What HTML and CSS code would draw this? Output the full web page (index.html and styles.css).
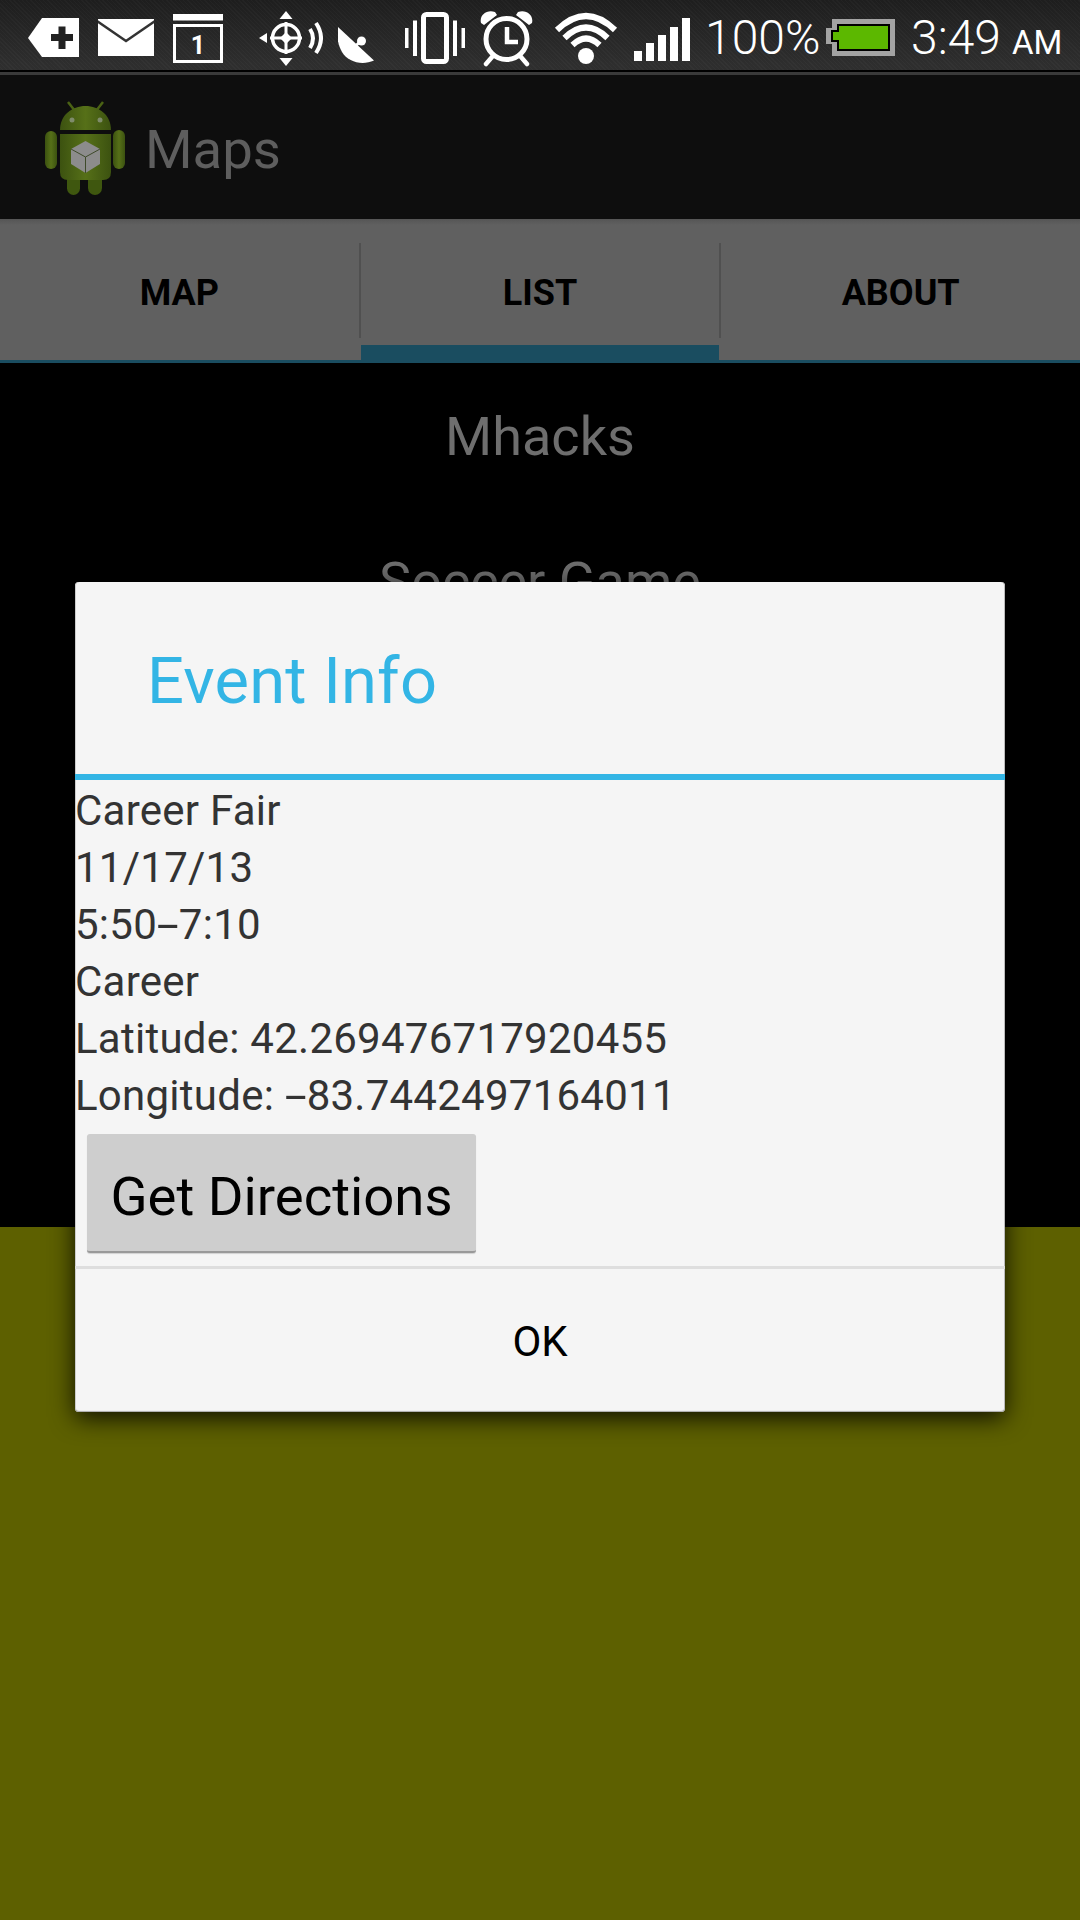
FILE: index.html
```html
<!DOCTYPE html>
<html lang="en">
<head>
<meta charset="utf-8">
<title>Maps</title>
<link rel="stylesheet" href="styles.css">
</head>
<body>
<div class="screen">
  <header class="status">
    <svg class="ic ic-tag" viewBox="28 0 51 72"><path fill="#fff" d="M28 38 42 18H79V57H42Z"/><path fill="#222" d="M58.500 26.500h7v7.500H73v7h-7.500v8h-7v-8H51v-7h7.500Z"/></svg>
    <svg class="ic ic-mail" viewBox="98 0 56 72"><rect x="98" y="19" width="56" height="37" fill="#fff"/><path d="M97 21 126 41 155 21" fill="none" stroke="#333" stroke-width="2.500"/></svg>
    <svg class="ic ic-cal" viewBox="173 0 50 72"><rect x="173" y="14" width="50" height="6.500" fill="#fff"/><rect x="174.500" y="25.500" width="47" height="36" fill="none" stroke="#fff" stroke-width="3"/><text x="198" y="54" class="cal-day">1</text></svg>
    <svg class="ic ic-gps" viewBox="259 0 64 72"><circle cx="286" cy="38" r="13.500" fill="none" stroke="#fff" stroke-width="3.500"/><path d="M286 22V54M270 38H302" stroke="#fff" stroke-width="3"/><path fill="#fff" d="M286 32 292 38 286 44 280 38ZM286 11 292.500 19H279.500ZM286 66 279.500 58H292.500ZM259 38 267 33V43Z"/><path d="M310 29Q316 38 310 48M316 23Q326 38 316 53" fill="none" stroke="#fff" stroke-width="4"/></svg>
    <svg class="ic ic-dish" viewBox="338 0 36 72"><path fill="#fff" d="M338 27 374 60.500C362 66 348 62 342 52 338 45 336 35 338 27Z"/><path d="M361 41 352 49" stroke="#fff" stroke-width="3"/><circle cx="361.500" cy="41" r="4.500" fill="#fff"/></svg>
    <svg class="ic ic-vib" viewBox="404 0 61 72"><rect x="423.500" y="14.500" width="23" height="47" rx="3" fill="none" stroke="#fff" stroke-width="5"/><path fill="#fff" d="M405 28h3.500v20H405ZM413 20.500h4v35.500h-4ZM453 20.500h4v35.500h-4ZM461.500 28h3.500v20h-3.500Z"/></svg>
    <svg class="ic ic-alarm" viewBox="480 0 54 72"><circle cx="506.500" cy="39" r="20.500" fill="none" stroke="#fff" stroke-width="5"/><path d="M507 27V42H518" fill="none" stroke="#fff" stroke-width="4.500"/><path fill="#fff" d="M481 23C479 15 487 9 495 12L497 15 484 25ZM532 23C534 15 526 9 518 12L516 15 529 25Z"/><path d="M492 57 486 64M521 57 527 64" stroke="#fff" stroke-width="4.500" stroke-linecap="round"/></svg>
    <svg class="ic ic-wifi" viewBox="554 0 64 72"><circle cx="586" cy="56" r="8" fill="#fff"/><path d="M557 30Q586 2 615 30M564.500 38Q586 17 607.500 38M572.500 45Q586 32 599.500 45" fill="none" stroke="#fff" stroke-width="6"/></svg>
    <svg class="ic ic-signal" viewBox="634 0 56 72"><path fill="#fff" d="M634 51h8v10h-8ZM646 43h8v18h-8ZM658 35h8v26h-8ZM670 27h8v34h-8ZM682 18h8v43h-8Z"/></svg>
    <span class="pct">100%</span>
    <svg class="ic ic-batt" viewBox="826 0 69 72"><path fill="#a3a3a3" d="M832 19H895V56H832V44H826V28H832Z"/><path fill="#000" d="M837 24H890V51H837V42H831V30H837Z"/><path fill="#5cb800" d="M839 26H888V49H839V40H833V32H839Z"/></svg>
    <span class="clock">3:49<span class="ampm">AM</span></span>
  </header>

  <div class="actionbar">
    <svg class="app-icon" viewBox="30 90 110 110">
      <defs>
        <linearGradient id="droid" x1="0" y1="0" x2="1" y2="0"><stop offset="0" stop-color="#3c5210"/><stop offset=".5" stop-color="#567018"/><stop offset="1" stop-color="#3c5210"/></linearGradient>
      </defs>
      <path d="M68 100 75 109M103 100 96 109" stroke="#4a6214" stroke-width="2.500"/>
      <path fill="url(#droid)" d="M60 128C60 113 72 104 85.500 104S111 113 111 128Z"/>
      <circle cx="72" cy="118" r="2.500" fill="#7f8c6b"/><circle cx="100" cy="118" r="2.500" fill="#7f8c6b"/>
      <rect x="45" y="129" width="12" height="38" rx="6" fill="url(#droid)"/>
      <rect x="113" y="128" width="12" height="39" rx="6" fill="url(#droid)"/>
      <rect x="67" y="170" width="13" height="23" rx="6.500" fill="#3f570f"/>
      <rect x="88" y="170" width="14" height="23" rx="7" fill="#3f570f"/>
      <path fill="url(#droid)" d="M60 132H111V170Q111 178 103 178H68Q60 178 60 170Z"/>
      <path fill="#8c8c8c" d="M71 147 85.500 139 100 147 100 162 85.500 171 71 162Z"/>
      <path fill="none" stroke="#3e4a2a" stroke-width="1" d="M71 147 85.500 155 100 147M85.500 155V171"/>
    </svg>
    <span class="app-title">Maps</span>
  </div>

  <nav class="tabs">
    <div class="tab">MAP</div>
    <div class="tab tab-active">LIST</div>
    <div class="tab">ABOUT</div>
  </nav>

  <main class="list">
    <div class="list-row">Mhacks</div>
    <div class="list-row">Soccer Game</div>
  </main>

  <div class="map"></div>

  <section class="dialog">
    <h2 class="dialog-title">Event Info</h2>
    <div class="dialog-body">
      <div>Career Fair</div>
      <div>11/17/13</div>
      <div>5:50<span class="dash">-</span>7:10</div>
      <div>Career</div>
      <div>Latitude: 42.269476717920455</div>
      <div>Longitude: <span class="dash">-</span>83.7442497164011</div>
    </div>
    <div class="directions">Get Directions</div>
    <div class="dialog-ok">OK</div>
  </section>
</div>
</body>
</html>
```

FILE: styles.css
```css
* { box-sizing: border-box; }
html, body { margin: 0; padding: 0; }
body { font-family: Roboto, "Liberation Sans", sans-serif; background: #5d6000; }

.screen {
  position: relative;
  width: 1080px;
  height: 1920px;
  overflow: hidden;
  display: flex;
  flex-direction: column;
}

/* status bar */
.status {
  height: 75px;
  padding-left: 28px;
  display: flex;
  align-items: flex-start;
  color: #fff;
  background:
    repeating-linear-gradient(45deg, rgba(255, 255, 255, .025) 0 1px, transparent 1px 3px),
    linear-gradient(#1e1e1e, #2e2e2e 90%);
  border-bottom: 3px solid #3a3a3a;
  box-shadow: inset 0 -2px 0 #000;
}
.ic { height: 72px; flex: none; display: block; }
.ic-tag { width: 51px; }
.ic-mail { width: 56px; margin-left: 19px; }
.ic-cal { width: 50px; margin-left: 19px; }
.ic-gps { width: 64px; margin-left: 36px; }
.ic-dish { width: 36px; margin-left: 15px; }
.ic-vib { width: 61px; margin-left: 30px; }
.ic-alarm { width: 54px; margin-left: 15px; }
.ic-wifi { width: 64px; margin-left: 20px; }
.ic-signal { width: 56px; margin-left: 16px; }
.ic-batt { width: 69px; margin-left: 2px; }
.cal-day { font: 700 25px Roboto, sans-serif; fill: #fff; text-anchor: middle; }
.pct {
  margin-left: 15px;
  margin-top: 2px;
  width: 119px;
  font-weight: 300;
  font-size: 48px;
  line-height: 72px;
  white-space: nowrap;
}
.clock {
  margin-left: 16px;
  margin-top: 2px;
  font-weight: 300;
  font-size: 48px;
  line-height: 72px;
  white-space: nowrap;
}
.ampm { margin-left: 11px; font-size: 33px; font-weight: 400; }

/* action bar */
.actionbar {
  height: 144px;
  padding-left: 30px;
  display: flex;
  align-items: center;
  background: #0e0e0e;
}
.app-icon { width: 110px; height: 110px; flex: none; }
.app-title { margin-left: 5px; padding-top: 4px; color: #5e5e5e; font-size: 54.5px; }

/* tabs */
.tabs {
  height: 144px;
  display: flex;
  background: linear-gradient(#555 0, #606060 6px);
  box-shadow: inset 0 -3px 0 #1a4d60;
}
.tab {
  position: relative;
  flex: 1;
  display: flex;
  align-items: center;
  justify-content: center;
  padding-top: 4px;
  font-size: 36px;
  font-weight: 700;
  color: #000;
}
.tab-active {
  box-shadow: inset 0 -18px 0 #1a4d60;
  margin: 0 2px;
}
.tab-active::before, .tab-active::after {
  content: "";
  position: absolute;
  top: 24px;
  height: 95px;
  width: 2px;
  background: #505050;
}
.tab-active::before { left: -2px; }
.tab-active::after { right: -2px; }

/* list */
.list {
  height: 864px;
  background: #000;
  overflow: hidden;
}
.list-row {
  height: 145px;
  display: flex;
  align-items: center;
  justify-content: center;
  padding-top: 2px;
  font-size: 54px;
  color: #6e6e6e;
}
.map { flex: 1; background: #5d6000; }

/* dialog */
.dialog {
  position: absolute;
  left: 75px;
  top: 582px;
  width: 930px;
  height: 830px;
  display: flex;
  flex-direction: column;
  background: #f5f5f5;
  border-radius: 4px;
  box-shadow: inset 0 -2px 1px -1px #aaa, inset 1px 0 0 #ccc, inset -1px 0 0 #bbb, 0 6px 24px rgba(0, 0, 0, .85);
}
.dialog-title {
  margin: 0;
  height: 198px;
  padding: 0 0 0 72px;
  border-bottom: 6px solid #33b5e5;
  font-size: 65px;
  font-weight: 400;
  line-height: 199px;
  letter-spacing: .2px;
  color: #33b5e5;
}
.dialog-body {
  padding: 2px 0 0 0;
  font-size: 42px;
  line-height: 57px;
  letter-spacing: .25px;
  color: #333;
}
.dash {
  display: inline-block;
  margin: 0 5px;
  transform: scaleX(1.9);
}
.directions {
  width: 389px;
  height: 119px;
  margin: 10px 0 13px 12px;
  padding-top: 6px;
  display: flex;
  align-items: center;
  justify-content: center;
  font-size: 54.5px;
  color: #000;
  background: #cecece;
  border-radius: 3px;
  border-bottom: 2px solid #999;
  box-shadow: 0 1px 1px rgba(0, 0, 0, .15);
}
.dialog-ok {
  flex: 1;
  display: flex;
  align-items: center;
  justify-content: center;
  padding-top: 2px;
  border-top: 3px solid #dedede;
  font-size: 42px;
  color: #000;
}
```
